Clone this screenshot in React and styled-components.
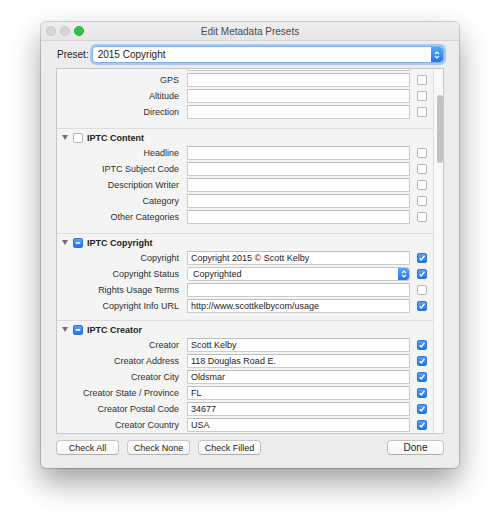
import React, { useLayoutEffect, useRef } from 'react';
import styled, { createGlobalStyle } from 'styled-components';

const GlobalStyle = createGlobalStyle`
  html, body { margin: 0; padding: 0; background: #ffffff; }
  body {
    font-family: "Liberation Sans", Arial, sans-serif;
    -webkit-font-smoothing: antialiased;
  }
`;

const Page = styled.div`
  width: 500px;
  height: 527px;
  box-sizing: border-box;
  padding-top: 22px;
  display: flex;
  justify-content: center;
`;

const Window = styled.div`
  width: 418px;
  height: 446px;
  background: #ececec;
  border-radius: 5px;
  box-shadow: 0 0 0 1px rgba(0, 0, 0, 0.16), 0 14px 30px rgba(0, 0, 0, 0.38);
  display: flex;
  flex-direction: column;
  overflow: hidden;
`;

const TitleBar = styled.div`
  height: 18px;
  border-bottom: 1px solid #d2d2d2;
  background: linear-gradient(#eeeeee, #e6e6e6);
  display: grid;
  grid-template-columns: 1fr auto 1fr;
  align-items: center;
`;

const Lights = styled.div`
  display: flex;
  gap: 4px;
  padding-left: 5px;
`;

const Light = styled.span`
  width: 10px;
  height: 10px;
  border-radius: 50%;
  box-sizing: border-box;
  background: ${p => (p.green ? '#2fc540' : '#d6d6d6')};
  border: 1px solid ${p => (p.green ? '#27a536' : '#c7c7c7')};
`;

const Title = styled.div`
  font-size: 10px;
  color: #4a4a4a;
`;

const PresetRow = styled.div`
  margin-top: 5px;
  padding: 0 15px 0 16px;
  display: flex;
  align-items: center;
  gap: 3px;
`;

const PresetLabel = styled.span`
  font-size: 10px;
  color: #222;
`;

const Select = styled.div`
  flex: 1;
  height: ${p => (p.small ? 14 : 17)}px;
  box-sizing: border-box;
  background: #fff;
  border: 1px solid ${p => (p.focused ? '#7fb0ee' : '#c8c8c8')};
  border-radius: ${p => (p.small ? 3 : 4)}px;
  box-shadow: ${p => (p.focused ? '0 0 0 2px rgba(120, 170, 240, 0.55)' : 'none')};
  display: flex;
  align-items: center;
  font-size: ${p => (p.small ? 9 : 10)}px;
  color: #222;
  overflow: hidden;
`;

const SelectText = styled.span`
  flex: 1;
  padding-left: 5px;
`;

const SelectButton = styled.span`
  width: ${p => (p.small ? 11 : 12)}px;
  align-self: stretch;
  background: linear-gradient(#5aa6fb, #1f74ef);
  display: flex;
  align-items: center;
  justify-content: center;
  border-radius: 0 3px 3px 0;
`;

const Panel = styled.div`
  margin: 5px 15px 0;
  height: 366px;
  box-sizing: border-box;
  border: 1px solid #c6c6c6;
  background: #f4f4f4;
  display: flex;
`;

const ScrollArea = styled.div`
  flex: 1;
  overflow: hidden;
`;

const Track = styled.div`
  width: 10px;
  box-sizing: border-box;
  border-left: 1px solid #dcdcdc;
  background: #f8f8f8;
  padding: 26px 0 0 3px;
`;

const Thumb = styled.div`
  width: 6px;
  height: 68px;
  border-radius: 3px;
  background: #c2c2c2;
`;

const Section = styled.div`
  border-top: ${p => (p.first ? 'none' : '1px solid #dcdcdc')};
  padding-bottom: ${p => (p.tight ? 5 : 7)}px;
`;

const Header = styled.div`
  height: 17px;
  display: flex;
  align-items: center;
  padding-left: 5px;
  font-size: 9px;
  font-weight: bold;
  color: #222;
`;

const Triangle = styled.span`
  width: 0;
  height: 0;
  border-left: 3px solid transparent;
  border-right: 3px solid transparent;
  border-top: 5px solid #6f6f6f;
  margin-right: 5px;
`;

const HeaderText = styled.span`
  margin-left: 4px;
`;

const Row = styled.div`
  display: flex;
  align-items: center;
  height: 14px;
  margin-bottom: 2px;
`;

const Label = styled.span`
  width: 122px;
  margin-right: 8px;
  text-align: right;
  font-size: 9px;
  color: #2e2e2e;
  white-space: nowrap;
`;

const Field = styled.div`
  width: 223px;
  height: 14px;
  box-sizing: border-box;
  background: #fff;
  border: 1px solid #cbcbcb;
  border-top-color: #bdbdbd;
  padding: 0 3px;
  font-size: 9px;
  line-height: 12px;
  color: #222;
  white-space: nowrap;
  overflow: hidden;
`;

const SelectWrap = styled.div`
  width: 223px;
  display: flex;
`;

const Box = styled.span`
  width: 10px;
  height: 10px;
  box-sizing: border-box;
  border-radius: 2px;
  flex-shrink: 0;
  display: flex;
  align-items: center;
  justify-content: center;
  margin-left: ${p => (p.inRow ? 7 : 0)}px;
  background: ${p => (p.on ? 'linear-gradient(#55a3fb, #1e74f0)' : '#fff')};
  border: 1px solid ${p => (p.on ? '#2f74d6' : '#b4b4b4')};
`;

const Footer = styled.div`
  margin-top: 6px;
  padding: 0 15px;
  display: flex;
  gap: 8px;
`;

const Button = styled.div`
  width: ${p => p.w}px;
  height: 15px;
  margin-left: ${p => (p.right ? 'auto' : 0)};
  box-sizing: border-box;
  background: linear-gradient(#ffffff, #f6f6f6);
  border: 1px solid #c4c4c4;
  border-bottom-color: #afafaf;
  border-radius: 4px;
  display: flex;
  align-items: center;
  justify-content: center;
  font-size: ${p => (p.big ? 10 : 9)}px;
  color: #222;
`;

const Arrows = () => (
  <svg width="6" height="10" viewBox="0 0 6 10">
    <path d="M1 4 L3 2 L5 4 M1 6 L3 8 L5 6" fill="none" stroke="#fff" strokeWidth="1.2" />
  </svg>
);

const Check = ({ on, mixed, inRow }) => (
  <Box on={on || mixed} inRow={inRow}>
    {on && (
      <svg width="8" height="8" viewBox="0 0 8 8">
        <path d="M1.6 4.2 L3.2 5.9 L6.5 1.8" fill="none" stroke="#fff" strokeWidth="1.4" />
      </svg>
    )}
    {mixed && (
      <svg width="8" height="8" viewBox="0 0 8 8">
        <path d="M1.8 4 H6.2" stroke="#fff" strokeWidth="1.6" />
      </svg>
    )}
  </Box>
);

// the first row sits above the visible part of the scrolled list
const sections = [
  {
    rows: [
      { label: '' },
      { label: 'GPS' },
      { label: 'Altitude' },
      { label: 'Direction' },
    ],
  },
  {
    title: 'IPTC Content',
    rows: [
      { label: 'Headline' },
      { label: 'IPTC Subject Code' },
      { label: 'Description Writer' },
      { label: 'Category' },
      { label: 'Other Categories' },
    ],
  },
  {
    title: 'IPTC Copyright',
    mixed: true,
    tight: true,
    rows: [
      { label: 'Copyright', value: 'Copyright 2015 \u00A9 Scott Kelby', on: true },
      { label: 'Copyright Status', value: 'Copyrighted', on: true, select: true },
      { label: 'Rights Usage Terms' },
      { label: 'Copyright Info URL', value: 'http://www.scottkelbycom/usage', on: true },
    ],
  },
  {
    title: 'IPTC Creator',
    mixed: true,
    rows: [
      { label: 'Creator', value: 'Scott Kelby', on: true },
      { label: 'Creator Address', value: '118 Douglas Road E.', on: true },
      { label: 'Creator City', value: 'Oldsmar', on: true },
      { label: 'Creator State / Province', value: 'FL', on: true },
      { label: 'Creator Postal Code', value: '34677', on: true },
      { label: 'Creator Country', value: 'USA', on: true },
    ],
  },
];

const App = () => {
  const scrollRef = useRef(null);

  useLayoutEffect(() => {
    if (scrollRef.current) scrollRef.current.scrollTop = 12;
  }, []);

  return (
    <Page>
      <GlobalStyle />
      <Window>
        <TitleBar>
          <Lights>
            <Light />
            <Light />
            <Light green />
          </Lights>
          <Title>Edit Metadata Presets</Title>
          <span />
        </TitleBar>

        <PresetRow>
          <PresetLabel>Preset:</PresetLabel>
          <Select focused>
            <SelectText>2015 Copyright</SelectText>
            <SelectButton>
              <Arrows />
            </SelectButton>
          </Select>
        </PresetRow>

        <Panel>
          <ScrollArea ref={scrollRef}>
            {sections.map((s, i) => (
              <Section key={i} first={i === 0} tight={s.tight}>
                {s.title && (
                  <Header>
                    <Triangle />
                    <Check mixed={s.mixed} />
                    <HeaderText>{s.title}</HeaderText>
                  </Header>
                )}
                {s.rows.map((r, j) => (
                  <Row key={j}>
                    <Label>{r.label}</Label>
                    {r.select ? (
                      <SelectWrap>
                        <Select small>
                          <SelectText>{r.value}</SelectText>
                          <SelectButton small>
                            <Arrows />
                          </SelectButton>
                        </Select>
                      </SelectWrap>
                    ) : (
                      <Field>{r.value}</Field>
                    )}
                    <Check on={r.on} inRow />
                  </Row>
                ))}
              </Section>
            ))}
          </ScrollArea>
          <Track>
            <Thumb />
          </Track>
        </Panel>

        <Footer>
          <Button w={63}>Check All</Button>
          <Button w={63}>Check None</Button>
          <Button w={63}>Check Filled</Button>
          <Button w={57} big right>Done</Button>
        </Footer>
      </Window>
    </Page>
  );
};

export default App;
